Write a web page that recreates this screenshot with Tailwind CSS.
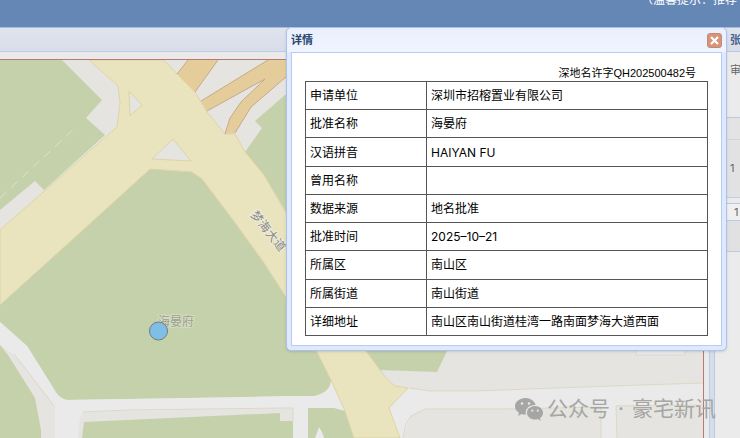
<!DOCTYPE html>
<html lang="zh-CN">
<head>
  <meta charset="UTF-8">
  <meta name="viewport" content="width=device-width, initial-scale=1">
  <title>详情</title>
  <script src="https://cdn.jsdelivr.net/npm/@tailwindcss/browser@4"></script>
</head>
<body class="relative flex h-screen flex-col overflow-hidden bg-[#eaeaea] font-['Inter','Noto_Sans_CJK_SC',sans-serif] text-xs">

  <header class="flex h-[27px] shrink-0 justify-end overflow-hidden bg-[#6487b5] text-white">
    <p class="-mt-2 w-[99px] shrink-0 leading-4 whitespace-nowrap">（温馨提示：推荐</p>
  </header>

  <main class="flex min-h-0 flex-1">
    <!-- map panel -->
    <section class="flex min-w-0 flex-1 flex-col">
      <div class="h-[25px] shrink-0 border-t border-b border-t-[#a9bcd8] border-b-[#bccae2] bg-linear-to-b from-[#e0e4ee] to-[#d8dde9]"></div>
      <div class="mt-[7px] mr-[5px] min-h-0 flex-1 overflow-hidden border-t border-r border-[#b87878]">
        <svg class="block h-full w-full" viewBox="0 60 703 378" preserveAspectRatio="xMinYMin slice" role="img" aria-label="地图">
          <rect y="60" width="1400" height="1000" fill="#e5e4e0"/>
          <!-- green land -->
          <g fill="#c5d1aa">
            <path d="M0 60H62L102 100L86 118L105 135L44 190L35 181L0 210Z"/>
            <path d="M300 82L255 121L262 128L245 152L264 175L300 235Z"/>
            <path d="M0 305L94 220L150 169L192 172L202 179L233 220L262 260L286 297L317 352L331 380Q330 394 314 396L61 400L27 346L0 322Z"/>
            <path d="M350 330L366 351L380 370L437 372L447 351V330Z"/>
            <path d="M0 345L8 355L35 398L41 430V438H0Z"/>
            <path d="M84 422L280 413V421H293V438H82Z"/>
          </g>
          <path d="M0 198L76 127" fill="none" stroke="#dde2cd" stroke-width="1" stroke-dasharray="9 6"/>
          <!-- small streets -->
          <path d="M0 322L27 346L52 386Q58 399 68 400L190 398L286 396L314 396Q331 392 331 380L409 388L430 391H475L640 385L703 383V405H616L617 438H601V407L505 409H425L411 416L403 438H293V408L83 412Q79 415 78 438H55V407L14 355L0 345Z" fill="#eaeaea"/>
          <path d="M14 354L55 407M83 412L130 410L286 408H293V421M403 438L406 424L411 416L425 409H505L601 407V438M617 438L616 406L703 405M409 388L430 391H475L640 385L703 383" fill="none" stroke="#dbd9c4" stroke-width="1"/>
          <path d="M308 408H334L345 411L354 438H324L322 432L319 427L315 438H308Z" fill="#c5d1aa"/>
          <path d="M636 345V355H685V345" fill="#eaeaea" stroke="#d8d8d8"/>
          <!-- main roads -->
          <path d="M89 60L118 86L120 103L117 127L0 230V305L94 220L150 169L192 172L202 179L233 220L262 260L286 297L317 352L331 380L345 411L354 438H400L389 408L408 388L395 386Q387 381 380 370L366 351L286 213L264 175L245 152L235 134H225L207 112L195 92L177 74L164 60Z" fill="#e9e4be" stroke="#ddd4a6"/>
          <path d="M129 91L142 105L130 116ZM173 139L191 161L152 159Z" fill="#e5e4e0" stroke="#ddd4a6"/>
          <path d="M188 60H218L195 92L177 74Z" fill="#e5cd9b"/>
          <path d="M268 60H300V65L251 107L235 133L225 134L230 118L241 102L265 79L207 111L201 101Z" fill="#e5cd9b"/>
          <path d="M188 60L177 74M218 60L195 92M268 60L201 101M225 134L230 118L241 102L265 79L207 111M300 65L251 107L235 133" fill="none" stroke="#c5aa8c"/>
          <!-- labels -->
          <text transform="translate(250 215) rotate(51)" font-size="12" fill="#8d8b84" stroke="#eeebdc" stroke-width="2" paint-order="stroke">梦海大道</text>
          <text x="158" y="326" font-size="12" fill="#9ca38d" stroke="#d5dcc5" stroke-width="2" paint-order="stroke">海晏府</text>
          <circle cx="158.500" cy="331" r="9" fill="#80bfe5" stroke="#737a7c"/>
        </svg>
      </div>
    </section>

    <div class="mt-[25px] w-1.5 shrink-0 border-x border-[#b9cce8] bg-[#d5dee8]"></div>

    <!-- side panel -->
    <aside class="flex w-[25px] shrink-0 flex-col overflow-hidden bg-[#ebebeb] text-[#666] *:shrink-0 *:pl-[15px]">
      <h2 class="h-[25px] border-t border-b border-t-[#a9bcd8] border-b-[#b9cae6] bg-linear-to-b from-[#e0e4ee] to-[#d8dde9] text-[11px] leading-6 font-bold whitespace-nowrap text-[#48648f]">张</h2>
      <p class="h-[65px] pt-2 text-[11px] leading-5 whitespace-nowrap">审</p>
      <div class="h-[22px] border-t border-[#b9cae6] bg-[#e3e3e3]"></div>
      <div class="flex h-[59px] items-center border-t border-b border-t-[#d5d5d5] border-b-[#c4d0e2] bg-[#e2e2e2] text-[11px]">1</div>
      <div class="mt-[5px] flex h-[18px] items-center border-t border-b border-[#b9cae6] bg-[#f0f0f0] text-[11px]"><span class="pl-1">1</span></div>
      <div class="h-[31px] border-b border-[#b9cae6] bg-[#e1e1e1]"></div>
    </aside>
  </main>

  <!-- account watermark -->
  <div class="absolute right-6 bottom-[13px] flex items-center gap-1 text-[#a6a6a4]">
    <svg class="h-6 w-7" viewBox="0 0 28 24" fill="currentColor" aria-hidden="true">
      <path fill-rule="evenodd" d="M10.500 1C4.700 1 0 4.700 0 9.300C0 12 1.500 14.300 4 15.800L3 19L6.700 17Q8.500 17.600 10.800 17.500Q9.500 8.500 20.700 8C19.500 4 15.500 1 10.500 1ZM7 5.200A1.300 1.300 0 1 1 7 7.800A1.300 1.300 0 1 1 7 5.200ZM14 5.200A1.300 1.300 0 1 1 14 7.800A1.300 1.300 0 1 1 14 5.200Z"/>
      <path fill-rule="evenodd" d="M20 9C15.500 9 12 12 12 15.800C12 19.700 15.500 22.600 20 22.600Q21.500 22.600 23 22L25.800 23.700L25 21C27 19.700 28 17.900 28 15.800C28 12 24.500 9 20 9ZM17.300 12.600A1.100 1.100 0 1 1 17.300 14.800A1.100 1.100 0 1 1 17.300 12.600ZM22.800 12.600A1.100 1.100 0 1 1 22.800 14.800A1.100 1.100 0 1 1 22.800 12.600Z"/>
    </svg>
    <p class="flex gap-2 text-[21px] leading-8 whitespace-nowrap"><span>公众号</span><span>·</span><span>豪宅新讯</span></p>
  </div>

  <!-- detail dialog -->
  <div role="dialog" aria-labelledby="dialog-title" class="absolute top-[27px] right-[13px] w-[441px] rounded-[5px] border border-[#a9c4f0] bg-[#dfe9fb] px-1 pb-1 shadow-sm">
    <div class="-mx-1 flex h-6 items-center justify-between rounded-t-[5px] bg-linear-to-b from-[#e9effd] to-[#f0f4ff] px-1">
      <h1 id="dialog-title" class="text-[11px] font-bold text-[#2b4470]">详情</h1>
      <button type="button" aria-label="关闭" class="flex size-[15px] items-center justify-center rounded-[3px] border border-[#c08a76] bg-[#d69479] text-white">
        <svg class="size-[9px]" viewBox="0 0 9 9" fill="none" stroke="currentColor" stroke-width="2.200"><path d="M1 1L8 8M8 1L1 8"/></svg>
      </button>
    </div>
    <div class="border border-[#b5cdf5] bg-white px-[13px] pt-[13px] pb-[9px] text-black">
      <p class="pr-3 text-right font-['Liberation_Sans','Noto_Sans_CJK_SC',sans-serif] text-[11px] leading-[15px]">深地名许字QH202500482号</p>
      <table class="h-[255px] w-full table-fixed border-collapse text-left *:*:*:border *:*:*:border-[#555] *:*:*:px-1 *:*:*:pt-px *:*:*:font-normal">
        <tbody>
          <tr><th scope="row" class="w-[121px]">申请单位</th><td>深圳市招榕置业有限公司</td></tr>
          <tr><th scope="row">批准名称</th><td>海晏府</td></tr>
          <tr><th scope="row">汉语拼音</th><td>HAIYAN FU</td></tr>
          <tr><th scope="row">曾用名称</th><td></td></tr>
          <tr><th scope="row">数据来源</th><td>地名批准</td></tr>
          <tr><th scope="row">批准时间</th><td>2025–10–21</td></tr>
          <tr><th scope="row">所属区</th><td>南山区</td></tr>
          <tr><th scope="row">所属街道</th><td>南山街道</td></tr>
          <tr><th scope="row">详细地址</th><td>南山区南山街道桂湾一路南面梦海大道西面</td></tr>
        </tbody>
      </table>
    </div>
  </div>

</body>
</html>
